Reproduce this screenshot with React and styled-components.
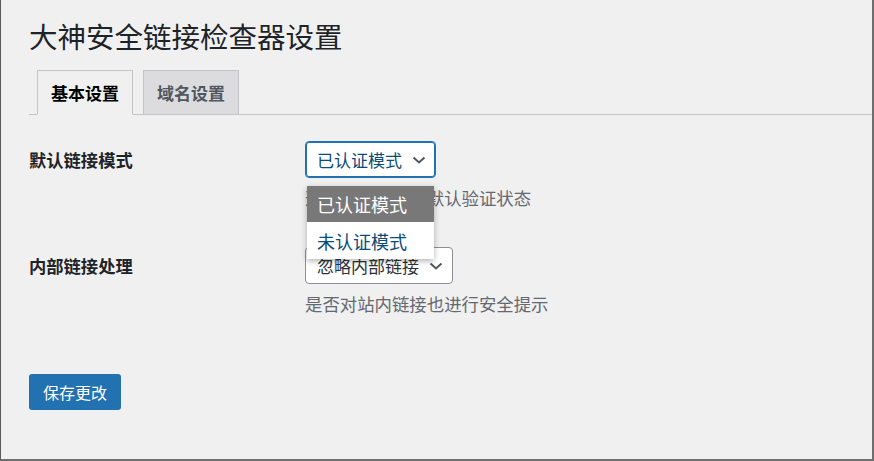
import styled, { createGlobalStyle } from 'styled-components';

const GlobalStyle = createGlobalStyle`
    html, body {
        margin: 0;
        padding: 0;
        background: #f0f0f1;
    }
    body {
        font-family: "Noto Sans CJK SC", "Noto Sans", "Liberation Sans", sans-serif;
        color: #1d2327;
    }
`

const Frame = styled.div`
    box-sizing: border-box;
    width: 874px;
    height: 461px;
    border-left: 1px solid #5a5a5a;
    border-right: 2px solid #6e6e6e;
    border-bottom: 2px solid #6e6e6e;
    background: #f0f0f1;
    padding: 17px 0 0 28px;
    overflow: hidden;
`

const Title = styled.h1`
    margin: 0;
    font-size: 28.5px;
    line-height: 37px;
    font-weight: 400;
    color: #1d2327;
`

const TabBar = styled.div`
    display: flex;
    align-items: flex-end;
    gap: 10px;
    margin-top: 16px;
    padding-left: 8px;
    border-bottom: 1px solid #c3c4c7;
`

const Tab = styled.div`
    box-sizing: border-box;
    height: ${p => (p.$active ? 45 : 44)}px;
    margin-bottom: ${p => (p.$active ? -1 : 0)}px;
    padding: 0 13px;
    display: flex;
    align-items: center;
    border: 1px solid #c3c4c7;
    border-bottom: ${p => (p.$active ? '1px solid #f0f0f1' : 'none')};
    background: ${p => (p.$active ? '#f0f0f1' : '#dcdcde')};
    color: ${p => (p.$active ? '#000' : '#50575e')};
    font-size: 17px;
    font-weight: 700;
    cursor: pointer;
`

const Form = styled.div`
    display: flex;
    flex-direction: column;
    gap: 37px;
    padding-top: 26px;
`

const Row = styled.div`
    display: grid;
    grid-template-columns: 276px 1fr;
    align-items: start;
`

const Label = styled.div`
    font-size: 17.3px;
    line-height: 37px;
    font-weight: 700;
    color: #1d2327;
`

const Field = styled.div`
    position: relative;
    display: flex;
    flex-direction: column;
    align-items: flex-start;
`

const Select = styled.div`
    box-sizing: border-box;
    height: 37px;
    display: flex;
    align-items: center;
    gap: 10px;
    padding: 0 9px 0 11px;
    border: 1px solid ${p => (p.$focused ? '#2271b1' : '#8c8f94')};
    box-shadow: ${p => (p.$focused ? 'inset 0 0 0 1px #2271b1' : 'none')};
    border-radius: 4px;
    background: #fff;
    color: ${p => (p.$focused ? '#0a4b78' : '#2c3338')};
    font-size: 17px;
    cursor: pointer;
`

const Chevron = styled.svg`
    width: 14px;
    height: 8px;
    color: #50575e;
`

const Description = styled.p`
    margin: 8px 0 0;
    font-size: 17.4px;
    line-height: 24px;
    color: #646970;
`

const Menu = styled.ul`
    position: absolute;
    top: 45px;
    left: 2px;
    width: 127px;
    margin: 0;
    padding: 0;
    list-style: none;
    background: #fff;
    box-shadow: 0 2px 6px rgba(0, 0, 0, 0.3);
    z-index: 2;
`

const Option = styled.li`
    height: ${p => (p.$selected ? 36 : 37)}px;
    display: flex;
    align-items: center;
    padding-left: 10px;
    font-size: 18px;
    background: ${p => (p.$selected ? '#787878' : '#fff')};
    color: ${p => (p.$selected ? '#fff' : '#0a4b78')};
`

const SaveButton = styled.button`
    margin-top: 58px;
    height: 36px;
    padding: 0 14px;
    border: none;
    border-radius: 3px;
    background: #2271b1;
    color: #fff;
    font-family: inherit;
    font-size: 16px;
    cursor: pointer;
`

function Arrow() {
    return (
        <Chevron viewBox="0 0 14 8" fill="none">
            <path d="M1.5 1.5 L7 6.5 L12.5 1.5" stroke="currentColor" strokeWidth="2" />
        </Chevron>
    )
}

function App() {
    return (
        <Frame>
            <GlobalStyle />
            <Title>大神安全链接检查器设置</Title>
            <TabBar>
                <Tab $active>基本设置</Tab>
                <Tab>域名设置</Tab>
            </TabBar>
            <Form>
                <Row>
                    <Label>默认链接模式</Label>
                    <Field>
                        <Select $focused>
                            已认证模式
                            <Arrow />
                        </Select>
                        <Description>选择外部链接的默认验证状态</Description>
                        <Menu>
                            <Option $selected>已认证模式</Option>
                            <Option>未认证模式</Option>
                        </Menu>
                    </Field>
                </Row>
                <Row>
                    <Label>内部链接处理</Label>
                    <Field>
                        <Select>
                            忽略内部链接
                            <Arrow />
                        </Select>
                        <Description>是否对站内链接也进行安全提示</Description>
                    </Field>
                </Row>
            </Form>
            <SaveButton>保存更改</SaveButton>
        </Frame>
    )
}

export default App;
